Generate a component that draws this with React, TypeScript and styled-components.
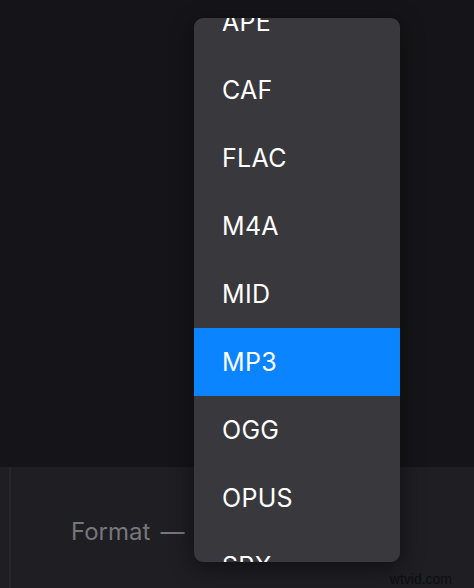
import React from 'react';
import styled, { createGlobalStyle } from 'styled-components';

const GlobalStyle = createGlobalStyle`
  html, body {
    margin: 0;
    padding: 0;
    background: #151519;
  }
  body {
    font-family: Inter, "Liberation Sans", sans-serif;
  }
`;

const Page = styled.div`
  position: relative;
  width: 474px;
  height: 588px;
  overflow: hidden;
  display: grid;
  grid-template-rows: 467px 1fr;
  background: #151519;
`;

const TopArea = styled.div`
  background: #151519;
`;

const BottomPanel = styled.div`
  background: #1e1e23;
  padding-left: 9px;
  display: flex;
`;

const PanelBody = styled.div`
  flex: 1;
  border-left: 2px solid #26262b;
  padding: 50px 0 0 60px;
  position: relative;
`;

const FieldLabel = styled.div`
  display: flex;
  gap: 10px;
  font-size: 24px;
  color: #76767b;
`;

const Watermark = styled.div`
  position: absolute;
  right: 22px;
  bottom: 1px;
  font-family: "Liberation Sans", sans-serif;
  font-size: 14px;
  color: #0e0e10;
`;

const Menu = styled.div`
  position: absolute;
  left: 194px;
  top: 18px;
  width: 206px;
  height: 544px;
  background: #39383d;
  border-radius: 9px;
  overflow: hidden;
  box-shadow: 0 6px 24px rgba(0, 0, 0, 0.45);
`;

const MenuList = styled.ul`
  list-style: none;
  margin: -30px 0 0;
  padding: 0;
`;

const MenuItem = styled.li<{ $active?: boolean }>`
  height: 68px;
  display: flex;
  align-items: center;
  padding-left: 28px;
  font-size: 25px;
  letter-spacing: 0.3px;
  color: #ffffff;
  background: ${({ $active }) => ($active ? '#0a84ff' : 'transparent')};
`;

const formats = ['APE', 'CAF', 'FLAC', 'M4A', 'MID', 'MP3', 'OGG', 'OPUS', 'SPX'];

const App: React.FC = () => (
  <>
    <GlobalStyle />
    <Page>
      <TopArea />
      <BottomPanel>
        <PanelBody>
          <FieldLabel>
            <span>Format</span>
            <span>—</span>
          </FieldLabel>
          <Watermark>wtvid.com</Watermark>
        </PanelBody>
      </BottomPanel>
      <Menu>
        <MenuList>
          {formats.map((f) => (
            <MenuItem key={f} $active={f === 'MP3'}>{f}</MenuItem>
          ))}
        </MenuList>
      </Menu>
    </Page>
  </>
);

export default App;
